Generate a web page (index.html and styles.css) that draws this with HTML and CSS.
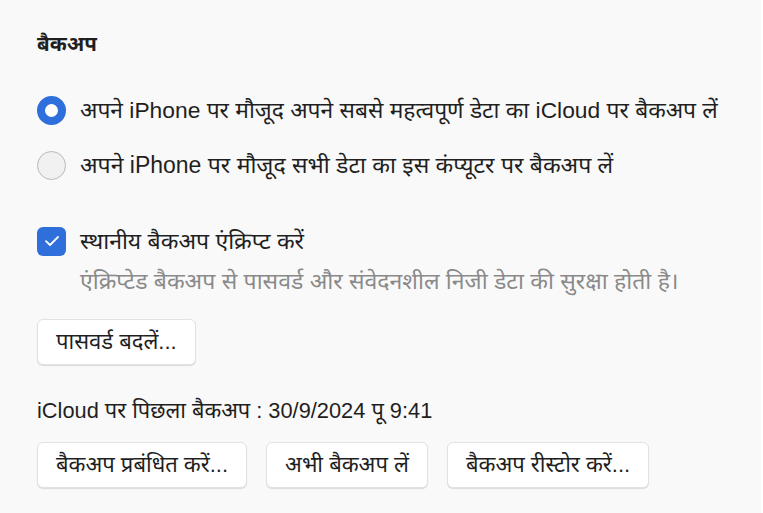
FILE: index.html
```html
<!DOCTYPE html>
<html lang="hi">
<head>
<meta charset="utf-8">
<link rel="stylesheet" href="styles.css">
</head>
<body>
<div class="page">
  <h2 class="title">बैकअप</h2>
  <div class="options">
    <label class="option first"><span class="radio on"></span><span>अपने iPhone पर मौजूद अपने सबसे महत्वपूर्ण डेटा का iCloud पर बैकअप लें</span></label>
    <label class="option"><span class="radio"></span><span>अपने iPhone पर मौजूद सभी डेटा का इस कंप्यूटर पर बैकअप लें</span></label>
  </div>
  <div class="encrypt">
    <label class="option"><span class="check"><svg width="16" height="12" viewBox="0 0 16 12"><path d="M2 6.2 L6 10 L14 2" fill="none" stroke="#fff" stroke-width="1.8" stroke-linecap="round" stroke-linejoin="round"/></svg></span><span>स्थानीय बैकअप एंक्रिप्ट करें</span></label>
    <p class="hint">एंक्रिप्टेड बैकअप से पासवर्ड और संवेदनशील निजी डेटा की सुरक्षा होती है।</p>
  </div>
  <button class="btn single">पासवर्ड बदलें...</button>
  <p class="last">iCloud पर पिछला बैकअप : 30/9/2024 पू 9:41</p>
  <div class="row">
    <button class="btn">बैकअप प्रबंधित करें...</button>
    <button class="btn">अभी बैकअप लें</button>
    <button class="btn">बैकअप रीस्टोर करें...</button>
  </div>
</div>
</body>
</html>
```
FILE: styles.css
```css
html, body {
  margin: 0;
  padding: 0;
  background: #fff;
}
body {
  font-family: "Liberation Sans", "Noto Sans Devanagari", "Noto Sans", "Lohit Devanagari", sans-serif;
  color: #1f1f1f;
  font-size: 23px;
}
.page {
  width: 761px;
  height: 513px;
  background: #f9f9f9;
  box-sizing: border-box;
  padding: 29px 0 0 37px;
}
.title {
  margin: 0 0 36px;
  font-size: 20.5px;
  font-weight: 700;
  line-height: 30px;
}
.options {
  display: flex;
  flex-direction: column;
  gap: 25px;
}
.option {
  display: flex;
  align-items: center;
  gap: 14px;
  line-height: 30px;
  height: 30px;
}
.option.first span:last-child {
  font-size: 22.8px;
}
.radio {
  width: 29px;
  height: 29px;
  box-sizing: border-box;
  border-radius: 50%;
  border: 1px solid #b8b8b8;
  background: #f1f1f1;
  flex: none;
}
.radio.on {
  border: 8px solid #2f6fdb;
  background: #fff;
}
.encrypt {
  margin-top: 46px;
}
.check {
  width: 29px;
  height: 29px;
  border-radius: 6px;
  background: #2f6fdb;
  display: flex;
  align-items: center;
  justify-content: center;
  flex: none;
}
.hint {
  margin: 12px 0 0 43px;
  color: #8a8a8a;
  line-height: 26px;
}
.btn {
  font: inherit;
  font-size: 22px;
  color: #1f1f1f;
  background: #fff;
  border: 1px solid #e2e2e2;
  border-radius: 6px;
  box-shadow: 0 1px 1px rgba(0,0,0,0.12);
  padding: 0 18px;
  height: 46px;
  line-height: 26px;
  display: block;
}
.btn.single {
  margin-top: 25px;
}
.last {
  margin: 33px 0 0;
  font-size: 21.8px;
  line-height: 26px;
}
.row {
  display: flex;
  gap: 19px;
  margin-top: 18px;
}
```
